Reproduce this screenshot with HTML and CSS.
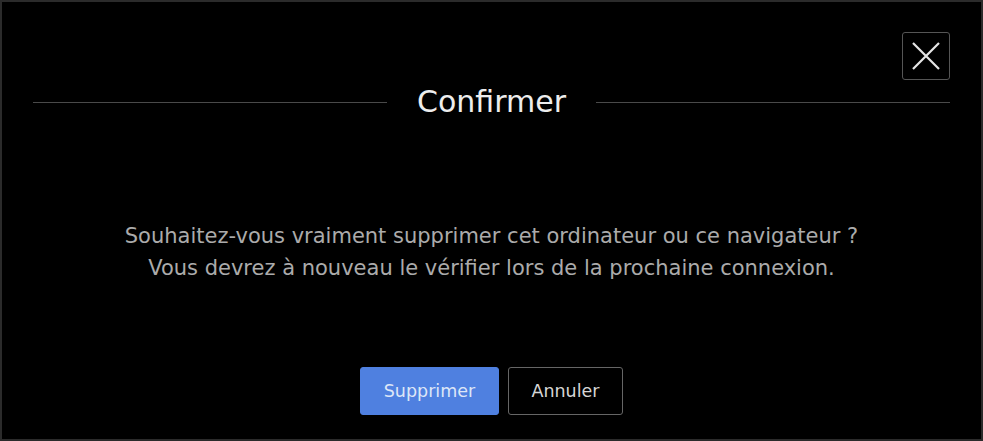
FILE: index.html
```html
<!DOCTYPE html>
<html lang="fr">
<head>
    <meta charset="UTF-8">
    <meta name="viewport" content="width=device-width, initial-scale=1.0">
    <title>Confirmer</title>
    <link rel="stylesheet" href="styles.css">
</head>
<body>
    <!-- boîte de confirmation -->
    <div class="dialog">
        <div class="dialog-top">
            <button class="dialog-close" type="button" aria-label="Fermer">
                <svg width="30" height="30" viewBox="0 0 30 30">
                    <path d="M2 2 L28 28 M28 2 L2 28" stroke="#e6e6e6" stroke-width="2.2" fill="none"/>
                </svg>
            </button>
        </div>
        <div class="dialog-title">
            <span class="title-line"></span>
            <h1>Confirmer</h1>
            <span class="title-line"></span>
        </div>
        <p class="dialog-text">
            Souhaitez-vous vraiment supprimer cet ordinateur ou ce navigateur ?<br>
            Vous devrez à nouveau le vérifier lors de la prochaine connexion.
        </p>
        <div class="dialog-actions">
            <button class="btn btn-primary" type="button">Supprimer</button>
            <button class="btn btn-outline" type="button">Annuler</button>
        </div>
    </div>
</body>
</html>
```

FILE: styles.css
```css
html, body {
    margin: 0;
    height: 100%;
    background: #000;
}
body {
    font-family: 'DejaVu Sans', sans-serif;
}
.dialog {
    box-sizing: border-box;
    height: 100%;
    border: 2px solid #2b2b2b;
    padding: 30px 31px 0;
    display: flex;
    flex-direction: column;
}
.dialog-top {
    display: flex;
    justify-content: flex-end;
}
.dialog-close {
    width: 48px;
    height: 48px;
    padding: 0;
    background: transparent;
    border: 1px solid #555;
    border-radius: 3px;
    display: flex;
    align-items: center;
    justify-content: center;
    cursor: pointer;
}
.dialog-title {
    display: flex;
    align-items: center;
    margin-top: 4px;
    height: 36px;
}
.title-line {
    flex: 1;
    height: 1px;
    background: #4a4a4a;
}
.dialog-title h1 {
    margin: 0 30px;
    font-size: 30px;
    font-weight: normal;
    color: #ededed;
    line-height: 36px;
}
.dialog-text {
    margin: 100px 0 0;
    text-align: center;
    font-size: 21px;
    line-height: 32px;
    color: #ababab;
}
.dialog-actions {
    display: flex;
    justify-content: center;
    gap: 9px;
    margin-top: 83px;
}
.btn {
    height: 48px;
    border-radius: 3px;
    font-family: inherit;
    font-size: 17.5px;
    cursor: pointer;
}
.btn-primary {
    width: 139px;
    background: #4f80e0;
    border: 1px solid #4f80e0;
    color: #dde6f7;
}
.btn-outline {
    width: 115px;
    background: transparent;
    border: 1px solid #666;
    color: #d6d6d6;
}
```
